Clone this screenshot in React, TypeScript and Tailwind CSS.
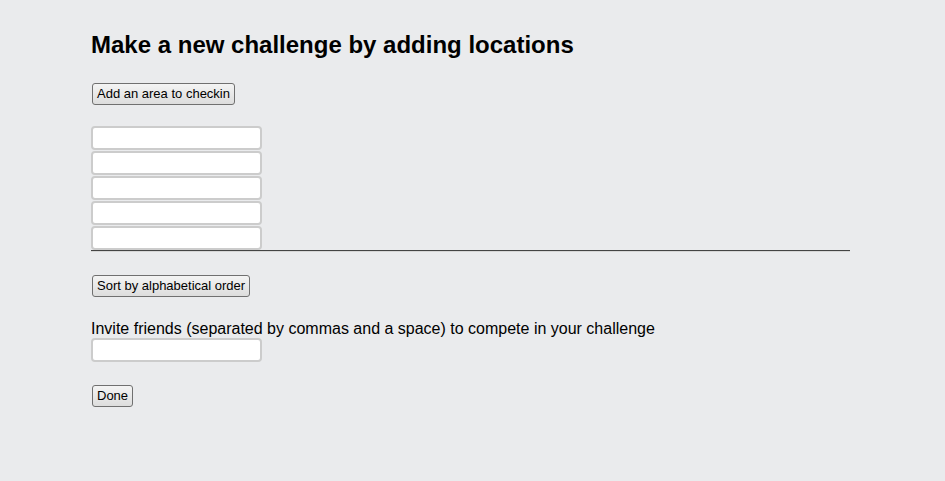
import React from "react";

function Btn({ children }: { children: React.ReactNode }) {
    return (
        <button className="h-[22px] px-[4px] border border-[#707070] rounded-[3px] bg-gradient-to-b from-[#f4f4f4] to-[#dddddd] text-[13px] leading-[18px] text-black font-['Liberation_Sans',Arial,sans-serif]">
            {children}
        </button>
    )
}

function Field() {
    return <input type="text" className="block h-[24px] w-[171px] bg-white border-2 border-[#cccccc] rounded-[4px] outline-none" />
}

export default function App() {
    return (
        <div className="min-h-[481px] w-full bg-[#eaebed] font-['Liberation_Sans',Arial,sans-serif] text-black">
            <div className="ml-[91px] w-[759px] pt-[31px]">
                <h1 className="text-[24px] leading-[28px] font-bold">Make a new challenge by adding locations</h1>

                <div className="mt-[24px] pl-px flex">
                    <Btn>Add an area to checkin</Btn>
                </div>

                {/* Locations */}
                <div className="mt-[21px] flex flex-col gap-px">
                    <Field />
                    <Field />
                    <Field />
                    <Field />
                    <Field />
                </div>
                <div className="h-0 border-t border-[#444444] border-b border-b-[#d6d6d6]" />

                <div className="mt-[23px] pl-px flex">
                    <Btn>Sort by alphabetical order</Btn>
                </div>

                <p className="mt-[22px] text-[16px] leading-[19px]">Invite friends (separated by commas and a space) to compete in your challenge</p>
                <Field />

                <div className="mt-[23px] pl-px flex">
                    <Btn>Done</Btn>
                </div>
            </div>
        </div>
    )
}
